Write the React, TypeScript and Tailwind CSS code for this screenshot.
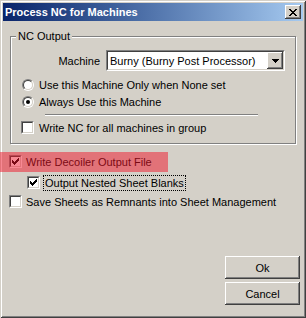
import type { ReactNode } from 'react'

// tiny pixel glyphs: each string row, 'X' = filled pixel
function Pixels({ rows, color = '#000' }: { rows: string[]; color?: string }) {
  const w = rows[0].length
  const h = rows.length
  return (
    <svg width={w} height={h} viewBox={`0 0 ${w} ${h}`} shapeRendering="crispEdges">
      {rows.flatMap((row, y) =>
        row.split('').map((c, x) =>
          c === 'X' ? <rect key={`${x}-${y}`} x={x} y={y} width={1} height={1} fill={color} /> : null,
        ),
      )}
    </svg>
  )
}

const CHECK = ['......X', '.....XX', 'X...XXX', 'XX.XXX.', 'XXXXX..', '.XXX...', '..X....']
const CLOSE = ['XX....XX', '.XX..XX.', '..XXXX..', '...XX...', '..XXXX..', '.XX..XX.', 'XX....XX']
const ARROW = ['XXXXXXX', '.XXXXX.', '..XXX..', '...X...']

const raised =
  'bg-[#d4d0c8] shadow-[inset_-1px_-1px_0_#404040,inset_1px_1px_0_#ffffff,inset_-2px_-2px_0_#808080]'

function Checkbox({ checked }: { checked?: boolean }) {
  return (
    <div className="w-[13px] h-[13px] shrink-0 border border-t-[#808080] border-l-[#808080] border-b-white border-r-white">
      <div className="w-full h-full flex items-center justify-center bg-white border border-t-[#404040] border-l-[#404040] border-b-[#d4d0c8] border-r-[#d4d0c8]">
        {checked && <Pixels rows={CHECK} />}
      </div>
    </div>
  )
}

function Radio({ checked }: { checked?: boolean }) {
  return (
    <div className="w-[12px] h-[12px] shrink-0 rounded-full border border-t-[#808080] border-l-[#808080] border-b-white border-r-white">
      <div className="w-full h-full rounded-full flex items-center justify-center bg-white border border-t-[#404040] border-l-[#404040] border-b-[#d4d0c8] border-r-[#d4d0c8]">
        {checked && <div className="w-[4px] h-[4px] rounded-full bg-black" />}
      </div>
    </div>
  )
}

function Row({ children, className = '' }: { children: ReactNode; className?: string }) {
  return <div className={`flex items-center h-[17px] ${className}`}>{children}</div>
}

export default function App() {
  return (
    <div className="relative w-[306px] h-[318px] bg-[#d4d0c8] p-[3px] flex flex-col text-[11px] leading-[14px] text-black font-['Liberation_Sans',Arial,sans-serif] shadow-[inset_1px_1px_0_#d4d0c8,inset_-1px_-1px_0_#404040,inset_2px_2px_0_#ffffff,inset_-2px_-2px_0_#808080]">
      {/* TITLE BAR */}
      <div className="h-[18px] flex items-center justify-between pl-[2px] pr-[2px] bg-linear-to-r from-[#0a246a] to-[#a6caf0]">
        <span className="font-bold text-white">Process NC for Machines</span>
        <div className={`w-[16px] h-[14px] flex items-center justify-center ${raised}`}>
          <Pixels rows={CLOSE} />
        </div>
      </div>

      {/* NC OUTPUT GROUP */}
      <fieldset className="mt-[8px] ml-[7px] w-[286px] border border-[#808080] shadow-[inset_1px_1px_0_#ffffff,1px_1px_0_#ffffff] pb-[7px]">
        <legend className="ml-[5px] px-[2px] bg-[#d4d0c8]">NC Output</legend>

        <div className="mt-[7px] flex items-center h-[21px]">
          <div className="w-[89px] text-right">Machine</div>
          <div className="ml-[6px] w-[179px] h-[21px] border border-t-[#808080] border-l-[#808080] border-b-white border-r-white">
            <div className="w-full h-full flex bg-white border border-t-[#404040] border-l-[#404040] border-b-[#d4d0c8] border-r-[#d4d0c8]">
              <div className="flex-1 flex items-center pl-[2px]">Burny (Burny Post Processor)</div>
              <div className={`w-[16px] h-full flex items-center justify-center ${raised}`}>
                <Pixels rows={ARROW} />
              </div>
            </div>
          </div>
        </div>

        <Row className="mt-[5px] ml-[11px]">
          <Radio />
          <span className="ml-[5px]">Use this Machine Only when None set</span>
        </Row>
        <Row className="ml-[11px]">
          <Radio checked />
          <span className="ml-[5px]">Always Use this Machine</span>
        </Row>

        <div className="mt-[4px] ml-[34px] w-[213px] h-[2px] border-t border-t-[#808080] border-b border-b-white" />

        <Row className="mt-[3px] ml-[10px]">
          <Checkbox />
          <span className="ml-[5px]">Write NC for all machines in group</span>
        </Row>
      </fieldset>

      {/* OPTIONS */}
      <Row className="mt-[9px] ml-[6px]">
        <Checkbox checked />
        <span className="ml-[4px]">Write Decoiler Output File</span>
      </Row>
      <Row className="mt-[4px] ml-[24px]">
        <Checkbox checked />
        <span className="ml-[3px] h-[16px] px-[1px] border border-dotted border-black">Output Nested Sheet Blanks</span>
      </Row>
      <Row className="mt-[2px] ml-[6px]">
        <Checkbox />
        <span className="ml-[4px]">Save Sheets as Remnants into Sheet Management</span>
      </Row>

      {/* BUTTONS */}
      <div className="mt-[46px] mr-[3px] flex flex-col items-end gap-[3px]">
        <button className={`w-[75px] h-[23px] ${raised}`}>Ok</button>
        <button className={`w-[75px] h-[23px] ${raised}`}>Cancel</button>
      </div>

      {/* highlight annotation over the decoiler row */}
      <div className="absolute left-0 top-[152px] w-[168px] h-[20px] bg-[rgba(240,20,40,0.5)]" />
    </div>
  )
}
